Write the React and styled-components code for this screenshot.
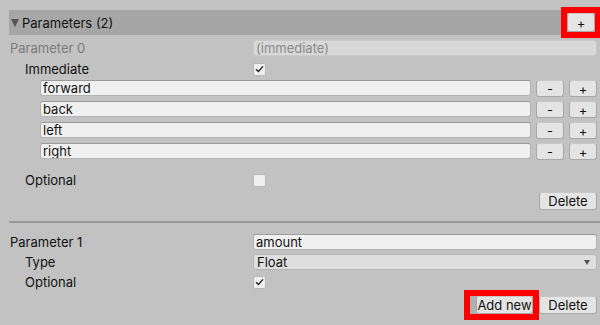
import React from "react";
import styled, { createGlobalStyle } from "styled-components";

const Global = createGlobalStyle`
  html, body { margin: 0; padding: 0; background: #c2c2c2; }
  body { font-family: Inter, "Noto Sans", "Liberation Sans", sans-serif; font-size: 13px; color: #111; }
  * { box-sizing: border-box; }
`;

const Page = styled.div`
  width: 600px;
  height: 325px;
  overflow: hidden;
  background: #c2c2c2;
  padding: 10px 0 0 9px;
`;

const Header = styled.div`
  height: 25px;
  background: #a6a6a6;
  display: flex;
  align-items: center;
  padding: 0 5px 0 2px;
`;

const Triangle = styled.span`
  width: 0;
  height: 0;
  border-left: 4.5px solid transparent;
  border-right: 4.5px solid transparent;
  border-top: 8px solid #555;
  margin-right: 3px;
  margin-top: 1px;
`;

const Title = styled.span`
  flex: 1;
  color: #111;
`;

const Body = styled.div`
  padding: 0 3px 0 1px;
`;

const Row = styled.div`
  display: grid;
  grid-template-columns: 243px 1fr;
  align-items: center;
  height: ${(p) => p.$h || 16}px;
  margin-top: ${(p) => p.$mt || 0}px;
`;

const Label = styled.span`
  padding-left: ${(p) => (p.$indent ? 15 : 0)}px;
  color: ${(p) => (p.$disabled ? "#7b7b7b" : "#111")};
  line-height: 16px;
  white-space: nowrap;
`;

const TextField = styled.div`
  height: 16px;
  border-radius: 3px;
  border: 1px solid ${(p) => (p.$disabled ? "#cacaca" : "#b3b3b3")};
  border-top-color: ${(p) => (p.$disabled ? "#cacaca" : "#9a9a9a")};
  background: ${(p) => (p.$disabled ? "#d8d8d8" : "#f0f0f0")};
  color: ${(p) => (p.$disabled ? "#8a8a8a" : "#111")};
  padding-left: 2px;
  line-height: 15px;
  white-space: nowrap;
  overflow: hidden;
  flex: 1;
`;

const Dropdown = styled.div`
  height: 16px;
  border-radius: 3px;
  border: 1px solid #b5b5b5;
  background: #dfdfdf;
  padding: 0 6px 0 3px;
  display: flex;
  align-items: center;
  justify-content: space-between;
  line-height: 15px;
`;

const Arrow = styled.span`
  width: 0;
  height: 0;
  border-left: 3.5px solid transparent;
  border-right: 3.5px solid transparent;
  border-top: 5px solid #555;
`;

const Check = styled.div`
  width: 13px;
  height: 13px;
  border-radius: 2px;
  border: 1px solid #b8b8b8;
  background: #f0f0f0;
  display: flex;
  align-items: center;
  justify-content: center;
`;

const List = styled.div`
  display: flex;
  flex-direction: column;
  gap: 4px;
  padding-left: 30px;
  margin-top: 2px;
`;

const ListRow = styled.div`
  display: flex;
  align-items: flex-start;
  height: 17px;
`;

const SmallButton = styled.button`
  width: 28px;
  height: ${(p) => p.$h || 17}px;
  margin-left: ${(p) => p.$ml ?? 5}px;
  border: 1px solid #a8a8a8;
  border-top-color: #c8c8c8;
  border-radius: 3px;
  background: #e4e4e4;
  font-family: inherit;
  font-size: 13px;
  color: #111;
  padding: 0;
  line-height: 14px;
`;

const ButtonRow = styled.div`
  display: flex;
  justify-content: flex-end;
  margin-top: ${(p) => p.$mt || 0}px;
`;

const Button = styled.button`
  height: 18px;
  padding: 0;
  border: 1px solid #a8a8a8;
  border-top-color: #c8c8c8;
  border-radius: 3px;
  background: #e4e4e4;
  font-family: inherit;
  font-size: 13px;
  color: #111;
  line-height: 15px;
  white-space: nowrap;
  width: ${(p) => p.$w}px;
`;

const Highlight = styled.div`
  outline: 6px solid #ff0000;
  display: flex;
  background: ${(p) => (p.$bg ? "#b0b0b0" : "transparent")};
  padding-left: ${(p) => p.$pad || 0}px;
  margin-right: ${(p) => p.$mr || 0}px;
`;

const Separator = styled.div`
  height: 2px;
  background: #999;
  margin-top: ${(p) => p.$mt}px;
`;

const Tick = () => (
  <svg width="9" height="8" viewBox="0 0 9 8">
    <path d="M1 4.2 L3.4 6.4 L8 1.4" fill="none" stroke="#222" strokeWidth="1.4" />
  </svg>
);

const items = ["forward", "back", "left", "right"];

export default function App() {
  return (
    <Page>
      <Global />
      <Header>
        <Triangle />
        <Title>Parameters (2)</Title>
        <Highlight>
          <SmallButton $ml={0} $h={19}>+</SmallButton>
        </Highlight>
      </Header>
      <Body>
        <Row $mt={5}>
          <Label $disabled>Parameter 0</Label>
          <TextField $disabled>(immediate)</TextField>
        </Row>
        <Row $h={18} $mt={4}>
          <Label $indent>Immediate</Label>
          <Check><Tick /></Check>
        </Row>
        <List>
          {items.map((t) => (
            <ListRow key={t}>
              <TextField>{t}</TextField>
              <SmallButton>-</SmallButton>
              <SmallButton>+</SmallButton>
            </ListRow>
          ))}
        </List>
        <Row $h={18} $mt={11}>
          <Label $indent>Optional</Label>
          <Check />
        </Row>
        <ButtonRow $mt={3}>
          <Button $w={58}>Delete</Button>
        </ButtonRow>
      </Body>
      <Separator $mt={11} />
      <Body>
        <Row $mt={11}>
          <Label>Parameter 1</Label>
          <TextField>amount</TextField>
        </Row>
        <Row $mt={4}>
          <Label $indent>Type</Label>
          <Dropdown>Float<Arrow /></Dropdown>
        </Row>
        <Row $h={18} $mt={3}>
          <Label $indent>Optional</Label>
          <Check><Tick /></Check>
        </Row>
        <ButtonRow $mt={5}>
          <Highlight $bg $pad={6} $mr={6}>
            <Button $w={57}>Add new</Button>
          </Highlight>
          <Button $w={58}>Delete</Button>
        </ButtonRow>
      </Body>
      <Separator $mt={11} />
    </Page>
  );
}
